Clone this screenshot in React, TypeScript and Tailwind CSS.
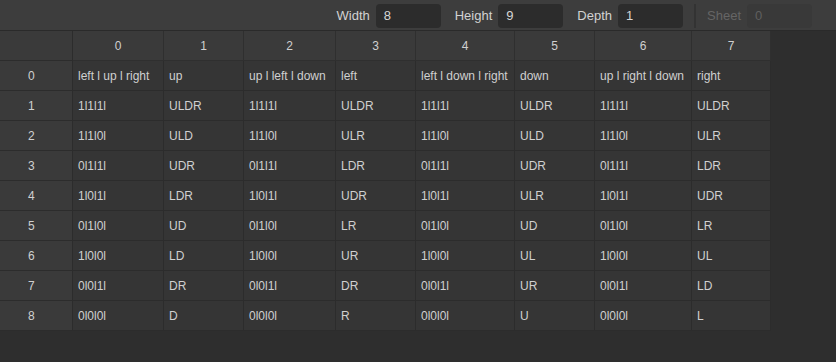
const cols = ["0", "1", "2", "3", "4", "5", "6", "7"];

const rows: string[][] = [
  ["left l up l right", "up", "up l left l down", "left", "left l down l right", "down", "up l right l down", "right"],
  ["1l1l1l", "ULDR", "1l1l1l", "ULDR", "1l1l1l", "ULDR", "1l1l1l", "ULDR"],
  ["1l1l0l", "ULD", "1l1l0l", "ULR", "1l1l0l", "ULD", "1l1l0l", "ULR"],
  ["0l1l1l", "UDR", "0l1l1l", "LDR", "0l1l1l", "UDR", "0l1l1l", "LDR"],
  ["1l0l1l", "LDR", "1l0l1l", "UDR", "1l0l1l", "ULR", "1l0l1l", "UDR"],
  ["0l1l0l", "UD", "0l1l0l", "LR", "0l1l0l", "UD", "0l1l0l", "LR"],
  ["1l0l0l", "LD", "1l0l0l", "UR", "1l0l0l", "UL", "1l0l0l", "UL"],
  ["0l0l1l", "DR", "0l0l1l", "DR", "0l0l1l", "UR", "0l0l1l", "LD"],
  ["0l0l0l", "D", "0l0l0l", "R", "0l0l0l", "U", "0l0l0l", "L"],
];

function Field({ label, value, disabled }: { label: string; value: string; disabled?: boolean }) {
  return (
    <div className="flex items-center gap-[6px]">
      <span className={disabled ? "text-[#656565]" : "text-[#d2d2d2]"}>{label}</span>
      <div
        className={`w-[65px] h-[24px] rounded-[4px] flex items-center pl-[8px] ${
          disabled ? "bg-[#393939] text-[#5f5f5f]" : "bg-[#2c2c2c] text-[#d6d6d6]"
        }`}
      >
        {value}
      </div>
    </div>
  );
}

export default function App() {
  return (
    <div
      className="w-[836px] h-[362px] bg-[#2e2e2e] flex flex-col overflow-hidden"
      style={{ fontFamily: '"Liberation Sans", Arial, sans-serif' }}
    >
      <div className="h-[31px] shrink-0 bg-[#3d3d3d] border-b border-[#2a2a2a] flex items-center justify-end pr-[24px] pt-px text-[13px]">
        <div className="flex items-center gap-[14px]">
          <Field label="Width" value="8" />
          <Field label="Height" value="9" />
          <Field label="Depth" value="1" />
        </div>
        <div className="w-[2px] h-[24px] bg-[#333333] mx-[11px]" />
        <Field label="Sheet" value="0" disabled />
      </div>

      <div className="grid grid-cols-[73px_91px_80px_92px_80px_99px_80px_97px_79px] w-[771px] text-[12px] text-[#d0d0d0]">
        <div className="h-[30px] bg-[#3a3a3a] border-r border-b border-[#2c2c2c]" />
        {cols.map((c) => (
          <div
            key={c}
            className="h-[30px] bg-[#3a3a3a] border-r border-b border-[#2f2f2f] flex items-center justify-center"
          >
            {c}
          </div>
        ))}
        {rows.map((r, i) => (
          <Row key={i} index={i} cells={r} />
        ))}
      </div>
    </div>
  );
}

function Row({ index, cells }: { index: number; cells: string[] }) {
  return (
    <>
      <div className="h-[30px] bg-[#3a3a3a] border-r border-b border-[#2c2c2c] flex items-center pl-[28px]">
        {index}
      </div>
      {cells.map((c, j) => (
        <div
          key={j}
          className="h-[30px] bg-[#353535] border-r border-b border-[#2c2c2c] flex items-center pl-[5px] whitespace-nowrap"
        >
          {c}
        </div>
      ))}
    </>
  );
}
